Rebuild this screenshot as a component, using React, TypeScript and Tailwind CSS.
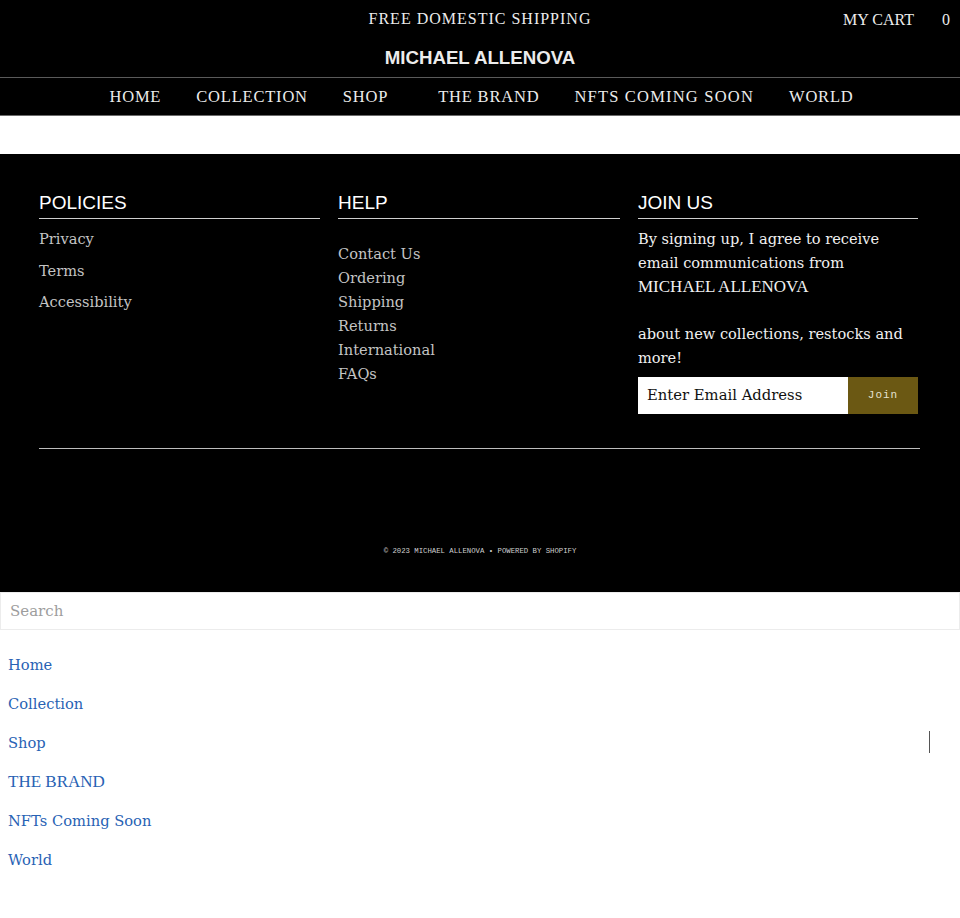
import React from "react";

const times = "font-['Liberation_Serif',serif]";
const deja = "font-['DejaVu_Serif',serif]";
const sans = "font-['Liberation_Sans',Arial,sans-serif]";
const mono = "font-['Liberation_Mono','DejaVu_Sans_Mono',monospace]";

const navItems = ["HOME", "COLLECTION", "SHOP", "THE BRAND", "NFTS COMING SOON", "WORLD"];
const policies = ["Privacy", "Terms", "Accessibility"];
const help = ["Contact Us", "Ordering", "Shipping", "Returns", "International", "FAQs"];
const menu = ["Home", "Collection", "Shop", "THE BRAND", "NFTs Coming Soon", "World"];

function FooterHeading({ children }: { children: React.ReactNode }) {
  return (
    <h3 className={`${sans} text-[19px] leading-[22px] text-white border-b border-[#cfcfcf] pt-[1px] pb-[4px]`}>
      {children}
    </h3>
  );
}

export default function App() {
  return (
    <div className="w-[960px] min-h-[918px] bg-white">
      {/* Header */}
      <header className="bg-black">
        <div className="h-[78px] grid grid-cols-[1fr_auto_1fr] border-b border-[#5a5a5a]">
          <div />
          <div className="flex flex-col items-center pt-[9px]">
            <span className={`${times} text-[16px] leading-[20px] tracking-[1px] text-[#ececec]`}>
              FREE DOMESTIC SHIPPING
            </span>
            <span className={`${sans} font-bold text-[18.7px] leading-[22px] text-[#ececec] mt-[18px]`}>
              MICHAEL ALLENOVA
            </span>
          </div>
          <div className="flex justify-end items-start pt-[10px] pr-[10px]">
            <span className={`${times} text-[16px] leading-[20px] text-[#ececec]`}>MY CART</span>
            <span className={`${times} text-[16px] leading-[20px] text-[#ececec] ml-[28px]`}>0</span>
          </div>
        </div>
        <nav className="h-[38px] flex justify-center items-center border-b border-[#6a6a6a] pl-[3px]">
          {navItems.map((item, i) => (
            <span
              key={item}
              className={`${times} text-[16.5px] leading-[20px] text-[#ececec] ${
                i === 4 ? "tracking-[1.2px]" : "tracking-[0.8px]"
              } ${i === 0 ? "" : i === 3 ? "ml-[50px]" : "ml-[35px]"}`}
            >
              {item}
            </span>
          ))}
        </nav>
      </header>

      <div className="h-[38px] bg-white" />

      {/* Footer */}
      <footer className="bg-black h-[438px] pt-[37px] flex flex-col">
        <div className="grid grid-cols-[281px_282px_280px] gap-x-[18px] pl-[39px]">
          <div>
            <FooterHeading>POLICIES</FooterHeading>
            <ul className="mt-[9px] flex flex-col gap-[9.5px]">
              {policies.map((p) => (
                <li key={p} className={`${deja} text-[14.6px] leading-[22px] text-[#c4c4c4]`}>
                  {p}
                </li>
              ))}
            </ul>
          </div>
          <div>
            <FooterHeading>HELP</FooterHeading>
            <ul className="mt-[23px] flex flex-col">
              {help.map((h) => (
                <li key={h} className={`${deja} text-[14.6px] leading-[24px] text-[#c4c4c4]`}>
                  {h}
                </li>
              ))}
            </ul>
          </div>
          <div>
            <FooterHeading>JOIN US</FooterHeading>
            <p className={`${deja} text-[14.6px] leading-[24px] text-[#f0f0f0] mt-[8px]`}>
              By signing up, I agree to receive email communications from{" "}
              <span className={`${times} text-[17px]`}>MICHAEL ALLENOVA</span>
            </p>
            <p className={`${deja} text-[14.6px] leading-[24px] text-[#f0f0f0] mt-[23px]`}>
              about new collections, restocks and more!
            </p>
            <div className="mt-[7px] flex h-[37px]">
              <div className={`${deja} flex-1 bg-white flex items-center pl-[9px] text-[14.8px] text-[#111]`}>
                Enter Email Address
              </div>
              <button className={`${mono} w-[70px] bg-[#6b5813] text-[11px] tracking-[1px] text-[#e4e0d0]`}>
                Join
              </button>
            </div>
          </div>
        </div>

        <div className="mt-[34px] ml-[39px] mr-[40px] h-px bg-[#bdbdbd]" />

        <div className="flex-1 flex items-center justify-center pt-[60px]">
          <span className={`${mono} text-[7.3px] leading-[10px] text-[#cfcfcf] uppercase`}>
            © 2023 MICHAEL ALLENOVA • POWERED BY SHOPIFY
          </span>
        </div>
      </footer>

      {/* Mobile menu */}
      <div className="h-[38px] border border-[#ececec] flex items-center pl-[9px]">
        <span className={`${deja} text-[15px] text-[#9d9d9d]`}>Search</span>
      </div>
      <div className="relative">
        <ul className="pt-[24px] pl-[8px] flex flex-col">
          {menu.map((m) => (
            <li
              key={m}
              className={`${m === "THE BRAND" ? times + " text-[17px]" : deja + " text-[14.7px]"} h-[39px] leading-[22px] text-[#2862b4]`}
            >
              {m}
            </li>
          ))}
        </ul>
        <div className="absolute left-[929px] top-[101px] w-px h-[22px] bg-[#555]" />
      </div>
    </div>
  );
}
